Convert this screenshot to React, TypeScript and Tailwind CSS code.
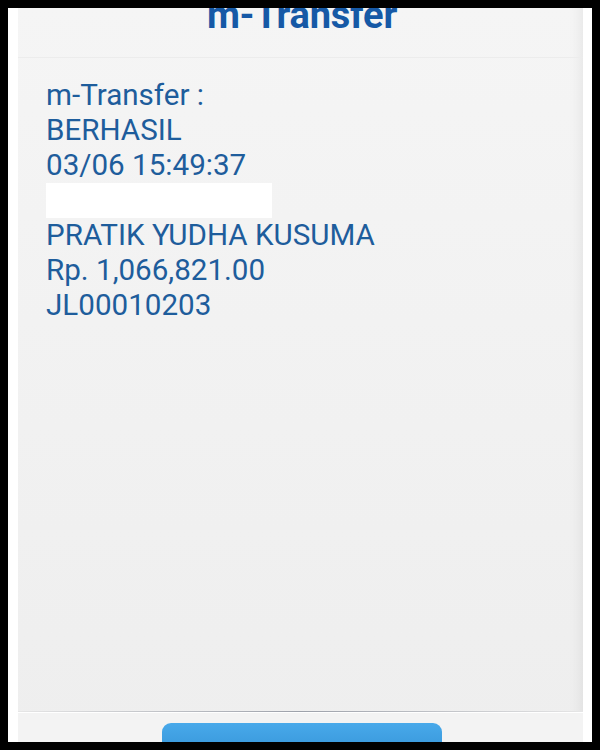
import React from "react";

const lines = [
  "m-Transfer :",
  "BERHASIL",
  "03/06 15:49:37",
  null,
  "PRATIK YUDHA KUSUMA",
  "Rp. 1,066,821.00",
  "JL00010203",
];

export default function App() {
  return (
    <div className="w-[600px] h-[750px] bg-black p-2 font-['Roboto','Liberation_Sans',sans-serif]">
      <div className="h-full flex bg-white pl-[10px] pr-[9px] overflow-hidden">
        <div className="flex-1 flex flex-col bg-gradient-to-b from-[#f5f5f5] to-[#eeeeee] shadow-[inset_-14px_0_14px_-12px_rgba(0,0,0,0.07)]">
          <div className="h-[50px] border-b border-[#ececec] overflow-hidden flex justify-center pl-[3px]">
            <h1 className="-mt-[12px] text-[38px] leading-[38px] font-bold text-[#1659a6] tracking-[-0.2px]">
              m-Transfer
            </h1>
          </div>

          <div className="flex-1 pl-[28px] pt-[20px] text-[29.6px] leading-[35px] text-[#1e5d9c]">
            {lines.map((line, i) =>
              line === null ? (
                <div key={i} className="w-[226px] h-[35px] bg-white" />
              ) : (
                <p key={i}>{line}</p>
              )
            )}
          </div>

          <div className="flex flex-col">
            <div className="h-[1px] bg-gradient-to-r from-[#e6e6e6] via-[#9da1aa] to-[#e6e6e6]" />
            <div className="h-[1px] bg-white" />
            <div className="flex justify-center pt-[10px] pl-[3px] bg-[#f3f3f3]">
              <button className="w-[280px] h-[19px] rounded-t-[9px] bg-gradient-to-b from-[#48a9ea] to-[#3d9de0]" />
            </div>
          </div>
        </div>
      </div>
    </div>
  );
}
